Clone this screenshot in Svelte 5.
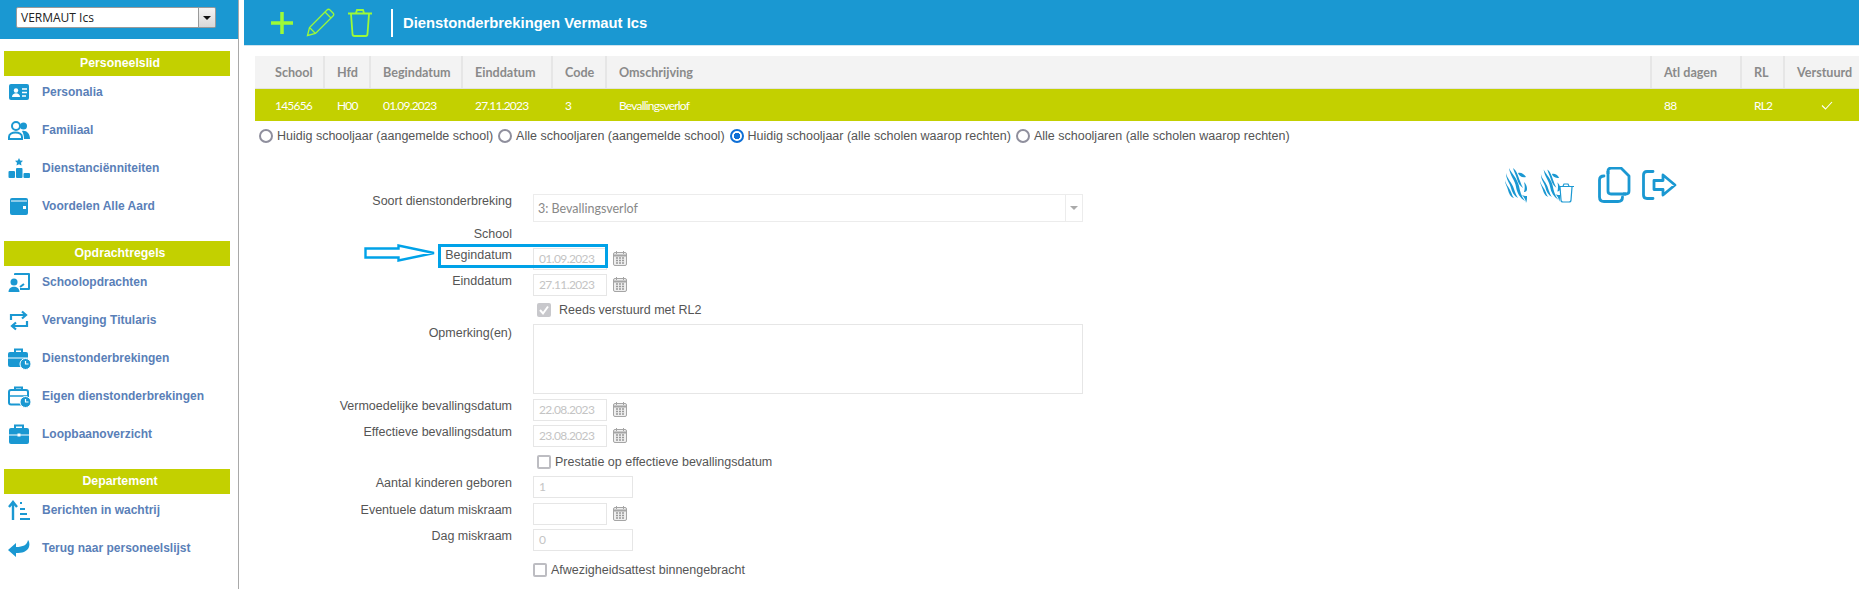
<script>
  const sections = [
    { title: "Personeelslid", items: [
      { label: "Personalia", icon: `<rect x="2" y="4" width="20" height="16" rx="2" fill="#1a98d2"/><circle cx="9" cy="10.5" r="2.2" fill="#fff"/><path d="M5 17c0-5 8-5 8 0z" fill="#fff"/><path d="M15 9h5M15 12.500h5M15 16h4" stroke="#fff" stroke-width="1.600"/>` },
      { label: "Familiaal", icon: `<circle cx="9" cy="8" r="4" fill="none" stroke="#1a98d2" stroke-width="2"/><circle cx="16.500" cy="8" r="3.500" fill="#1a98d2"/><path d="M2 21v-2c0-6 13-6 13 0v2z" fill="none" stroke="#1a98d2" stroke-width="2"/><path d="M15 13c4-1 8 2 8 8h-6c0-4-1-6-2-8z" fill="#1a98d2"/>` },
      { label: "Dienstanciënniteiten", icon: `<path d="M12 2l1.200 2.500 2.800.3-2 2 .5 2.700-2.500-1.300-2.500 1.300.5-2.700-2-2 2.800-.3z" fill="#1a98d2"/><rect x="1.500" y="15" width="6.500" height="7" rx="1" fill="#1a98d2"/><rect x="9" y="12" width="6.500" height="10" rx="1" fill="#1a98d2"/><rect x="16.500" y="17" width="6.500" height="5" rx="1" fill="#1a98d2"/>` },
      { label: "Voordelen Alle Aard", icon: `<rect x="3" y="4" width="18" height="17" rx="2" fill="#1a98d2"/><path d="M4 7h16" stroke="#fff" stroke-width="1"/><rect x="16" y="12" width="3" height="3" fill="#fff"/>` },
    ]},
    { title: "Opdrachtregels", items: [
      { label: "Schoolopdrachten", icon: `<path d="M8 5V4h14v15H13" fill="none" stroke="#1a98d2" stroke-width="2" stroke-linejoin="round"/><circle cx="7" cy="12" r="3.500" fill="#1a98d2"/><path d="M1.500 22c0-7 11-7 11 0z" fill="#1a98d2"/><path d="M13 17l4-3" stroke="#1a98d2" stroke-width="2"/>` },
      { label: "Vervanging Titularis", icon: `<path d="M4 12V7h14M15 3.500L19 7l-4 3.500M20 13v5H6M9 14.500L5 18l4 3.500" fill="none" stroke="#1a98d2" stroke-width="2.200"/>` },
      { label: "Dienstonderbrekingen", icon: `<path d="M8 6V3.500h7V6" fill="none" stroke="#1a98d2" stroke-width="2"/><rect x="1" y="6" width="20" height="15" rx="2" fill="#1a98d2"/><path d="M1 12h20" stroke="#fff"/><circle cx="18.500" cy="18" r="5.500" fill="#1a98d2" stroke="#fff"/><path d="M18.500 15v3h3" fill="none" stroke="#fff" stroke-width="1.200"/>` },
      { label: "Eigen dienstonderbrekingen", icon: `<path d="M8 6V3.500h7V6" fill="none" stroke="#1a98d2" stroke-width="2"/><rect x="2" y="6" width="19" height="14.500" rx="2" fill="none" stroke="#1a98d2" stroke-width="2"/><path d="M2 12h19" stroke="#1a98d2" stroke-width="1.500"/><circle cx="18.500" cy="18" r="5.500" fill="#1a98d2" stroke="#fff"/><path d="M18.500 15v3h3" fill="none" stroke="#fff" stroke-width="1.200"/>` },
      { label: "Loopbaanoverzicht", icon: `<path d="M8 6V3.500h8V6" fill="none" stroke="#1a98d2" stroke-width="2"/><rect x="2" y="6" width="20" height="16" rx="2" fill="#1a98d2"/><path d="M2 13h20" stroke="#fff"/><rect x="10.500" y="11.500" width="3" height="3" fill="#fff"/>` },
    ]},
    { title: "Departement", items: [
      { label: "Berichten in wachtrij", icon: `<path d="M6 22V5M2 9l4-5 4 5" fill="none" stroke="#1a98d2" stroke-width="2.400"/><path d="M13 5h2M13 11h5M13 16h7M13 21h10" stroke="#1a98d2" stroke-width="2"/>` },
      { label: "Terug naar personeelslijst", icon: `<path d="M9 7L1 14l8 7v-4c6 0 11-1 13-6 1-3 0-6-1-7-1 5-5 7-12 7z" fill="#1a98d2"/>` },
    ]},
  ];

  const columns = [
    { cls: "c-school", head: "School", val: "145656" },
    { cls: "c-hfd", head: "Hfd", val: "H00" },
    { cls: "c-begin", head: "Begindatum", val: "01.09.2023" },
    { cls: "c-eind", head: "Einddatum", val: "27.11.2023" },
    { cls: "c-code", head: "Code", val: "3" },
    { cls: "c-oms", head: "Omschrijving", val: "Bevallingsverlof" },
    { cls: "c-atl", head: "Atl dagen", val: "88" },
    { cls: "c-rl", head: "RL", val: "RL2" },
    { cls: "c-verst", head: "Verstuurd", val: "" },
  ];

  const radios = [
    { label: "Huidig schooljaar (aangemelde school)", on: false },
    { label: "Alle schooljaren (aangemelde school)", on: false },
    { label: "Huidig schooljaar (alle scholen waarop rechten)", on: true },
    { label: "Alle schooljaren (alle scholen waarop rechten)", on: false },
  ];
</script>

{#snippet calendar()}
  <svg class="cal" viewBox="0 0 14 15">
    <rect x="0.500" y="1.500" width="13" height="13" rx="1.500" fill="#eee" stroke="#a5a5a5"/>
    <path d="M1 4.500h12" stroke="#a5a5a5" stroke-width="2"/>
    <path d="M3.500 0v3M10.500 0v3" stroke="#a5a5a5"/>
    <path d="M3 7h2M6 7h2M9 7h2M3 9.500h2M6 9.500h2M9 9.500h2M3 12h2M6 12h2M9 12h2" stroke="#999" stroke-width="1.300"/>
  </svg>
{/snippet}

{#snippet lion()}
  <g fill="#1a98d2">
    <path d="M4 0c3 6 8 10 10 18 1 5 2 10 6 15-5-3-8-8-9-14C10 12 5 8 4 0z"/>
    <path d="M1 5c1 6 6 9 8 16 1 3 2 6 4 9-4-2-6-6-7-10C5 15 1 12 1 5z"/>
    <path d="M0 12c1 5 4 7 6 12 1 2 1 4 3 6-4-1-5-5-6-8-1-4-3-6-3-10z"/>
    <path d="M8 0c4 3 5 8 7 13 1 3 2 5 3 7-3-2-5-5-6-9-1-4-3-7-4-11z"/>
    <path d="M13 5c3-1 6 1 8 4-4 1-7-1-8-4z"/>
    <path d="M19 14c2 2 3 4 3 7 0 2-1 3-3 3 1-3 1-7 0-10z"/>
    <path d="M17 27c2 1 4 1 5 1 0 2 0 5-1 7 0-3-2-6-4-8z"/>
  </g>
{/snippet}

<div class="page">
  <aside>
    <div class="picker">
      <div class="combo">
        <span class="combo-text">VERMAUT Ics</span>
        <span class="combo-btn"><i></i></span>
      </div>
    </div>
    {#each sections as section}
      <section>
        <h3>{section.title}</h3>
        {#each section.items as item}
          <a href="#top" class="nav">
            <svg viewBox="0 0 24 24">{@html item.icon}</svg>
            <span>{item.label}</span>
          </a>
        {/each}
      </section>
    {/each}
  </aside>

  <main>
    <header>
      <svg class="tool plus" viewBox="0 0 24 24"><path d="M12 1v22M1 12h22" stroke="#9dfa37" stroke-width="3.500"/></svg>
      <svg class="tool pencil" viewBox="0 0 29 29"><path d="M1.500 27.500l2-8L21 2c1-1 2-1 3 0l3 3c1 1 1 2 0 3L9.500 25.500zM3.500 19.500l6 6M19 4l6 6" fill="none" stroke="#9dfa37" stroke-width="1.300"/></svg>
      <svg class="tool trash" viewBox="0 0 24 28"><path d="M0 4.500h24M8 4l1-3h6l1 3M3 5l1.500 20c0 1 1 2 2 2h11c1 0 2-1 2-2L21 5" fill="none" stroke="#9dfa37" stroke-width="1.800"/></svg>
      <div class="sep"></div>
      <h1>Dienstonderbrekingen Vermaut Ics</h1>
    </header>

    <div class="content">
      <div class="grid head">
        {#each columns as col}
          <div class="cell {col.cls}">{col.head}</div>
        {/each}
      </div>
      <div class="grid row-on">
        {#each columns as col}
          <div class="cell {col.cls}">
            {#if col.cls === "c-verst"}
              <svg class="tick" viewBox="0 0 12 9"><path d="M1 4.500l3.500 3.500L11 1" fill="none" stroke="#fff" stroke-width="1.100"/></svg>
            {:else}
              {col.val}
            {/if}
          </div>
        {/each}
      </div>

      <div class="radios">
        {#each radios as radio}
          <span class="radio" class:on={radio.on}></span>
          <span class="radio-label">{radio.label}</span>
        {/each}
      </div>

      <div class="actions">
        <svg class="lion" viewBox="0 0 23 35">{@render lion()}</svg>
        <span class="lion-trash">
          <svg class="lion" viewBox="0 0 23 35">{@render lion()}</svg>
          <svg class="mini-trash" viewBox="0 0 16 20"><path d="M0 3.500h16M5 3l1-2h4l1 2M2 4l1 13c0 1 1 2 2 2h6c1 0 2-1 2-2l1-13" fill="none" stroke="#1a98d2" stroke-width="1.200"/></svg>
        </span>
        <svg class="copy" viewBox="0 0 33 36"><path d="M10 7V4c0-1.500 1-3 3-3h10l8 8v15c0 2-1 3-3 3h-3M13 1.500" fill="none" stroke="#1a98d2" stroke-width="2.800" stroke-linejoin="round"/><path d="M10 4v20c0 2 1 3 3 3h15" fill="none" stroke="#1a98d2" stroke-width="2.800"/><path d="M6 9C3 9 1.500 10 1.500 13v17c0 3 2 4.500 4.500 4.500h14c3 0 4.500-1.500 4.500-4.500" fill="none" stroke="#1a98d2" stroke-width="2.800" stroke-linecap="round"/></svg>
        <svg class="leave" viewBox="0 0 35 30"><path d="M11 1.500H5C2.500 1.500 1.500 3 1.500 5v20c0 2 1 3.500 3.500 3.500h6" fill="none" stroke="#1a98d2" stroke-width="2.800" stroke-linecap="round"/><path d="M12 10.500h9V5l12 10-12 10v-5.500h-9z" fill="none" stroke="#1a98d2" stroke-width="2.800" stroke-linejoin="round"/></svg>
      </div>

      <form>
        <div class="f soort">
          <span class="lbl">Soort dienstonderbreking</span>
          <div class="dd"><span>3: Bevallingsverlof</span><b><i></i></b></div>
        </div>
        <div class="f school"><span class="lbl">School</span></div>
        <div class="f date begin">
          <span class="lbl">Begindatum</span>
          <div class="in">01.09.2023</div>
          {@render calendar()}
        </div>
        <div class="f date">
          <span class="lbl">Einddatum</span>
          <div class="in">27.11.2023</div>
          {@render calendar()}
        </div>
        <div class="f check reeds">
          <span class="lbl"></span>
          <span class="box done"><svg viewBox="0 0 14 14"><path d="M3 7l3 3.500L11 3.500" fill="none" stroke="#fff" stroke-width="2"/></svg></span>
          <span class="ctext">Reeds verstuurd met RL2</span>
        </div>
        <div class="f area">
          <span class="lbl">Opmerking(en)</span>
          <div class="ta"></div>
        </div>
        <div class="f date">
          <span class="lbl">Vermoedelijke bevallingsdatum</span>
          <div class="in">22.08.2023</div>
          {@render calendar()}
        </div>
        <div class="f date">
          <span class="lbl">Effectieve bevallingsdatum</span>
          <div class="in">23.08.2023</div>
          {@render calendar()}
        </div>
        <div class="f check prest">
          <span class="lbl"></span>
          <span class="box"></span>
          <span class="ctext">Prestatie op effectieve bevallingsdatum</span>
        </div>
        <div class="f date aantal">
          <span class="lbl">Aantal kinderen geboren</span>
          <div class="in wide">1</div>
        </div>
        <div class="f date event">
          <span class="lbl">Eventuele datum miskraam</span>
          <div class="in"></div>
          {@render calendar()}
        </div>
        <div class="f date dag">
          <span class="lbl">Dag miskraam</span>
          <div class="in wide">0</div>
        </div>
        <div class="f check afw">
          <span class="lbl"></span>
          <span class="box"></span>
          <span class="ctext">Afwezigheidsattest binnengebracht</span>
        </div>

        <!-- annotation drawn on top of the form -->
        <div class="mark"></div>
        <svg class="arrow" viewBox="0 0 72 18"><path d="M1.500 4.500h33V1.500L70 9 34.500 16.500v-3h-33z" fill="#fff" stroke="#00a2e8" stroke-width="2.400"/></svg>
      </form>
    </div>
  </main>
</div>

<style>
  :global(body) {
    margin: 0;
    background: #fff;
    font-family: "Liberation Sans", Arial, sans-serif;
  }
  .page {
    display: flex;
    width: 1859px;
    height: 589px;
    overflow: hidden;
  }
  aside {
    width: 234px;
    flex: none;
    border-right: 1px solid #a9a9a9;
    padding-left: 4px;
    margin-right: 5px;
  }
  .picker {
    background: #1a98d2;
    height: 39px;
    margin-left: -4px;
    margin-bottom: 12px;
    padding: 7px 0 0 16px;
    box-sizing: border-box;
  }
  .combo {
    display: flex;
    height: 21px;
    width: 200px;
  }
  .combo-text {
    flex: 1;
    background: #fff;
    border: 1px solid #9a9a9a;
    border-radius: 2px 0 0 2px;
    font: 12px/20px "Open Sans", sans-serif;
    color: #222;
    padding-left: 4px;
  }
  .combo-btn {
    width: 16px;
    border: 1px solid #9a9a9a;
    border-left: 0;
    border-radius: 0 2px 2px 0;
    background: linear-gradient(#f4f4f4, #d8d8d8);
    display: flex;
    align-items: center;
    justify-content: center;
  }
  .combo-btn i {
    border: 4px solid transparent;
    border-top: 4px solid #111;
    border-bottom: 0;
  }
  section {
    width: 226px;
    margin-bottom: 19px;
  }
  h3 {
    margin: 0;
    height: 25px;
    padding-left: 6px;
    background: #c3d000;
    color: #fff;
    font-size: 12.300px;
    font-weight: bold;
    line-height: 25px;
    text-align: center;
  }
  .nav {
    display: flex;
    align-items: center;
    gap: 11px;
    height: 32px;
    margin-bottom: 6px;
    text-decoration: none;
    color: #5a7fb8;
    font-size: 12px;
    font-weight: bold;
  }
  .nav svg {
    width: 24px;
    height: 24px;
    flex: none;
    margin-left: 3px;
  }
  main {
    flex: 1;
    min-width: 0;
  }
  header {
    height: 45px;
    background: #1a98d2;
    border-bottom: 1px solid #cfe3ee;
    display: flex;
    align-items: center;
    padding-left: 26px;
  }
  .tool {
    flex: none;
  }
  .plus {
    width: 24px;
    height: 24px;
    margin-right: 12px;
  }
  .pencil {
    width: 29px;
    height: 29px;
    margin-right: 13px;
  }
  .trash {
    width: 24px;
    height: 28px;
  }
  .sep {
    width: 2px;
    height: 28px;
    background: #fff;
    margin: 0 10px 0 19px;
  }
  h1 {
    margin: 0;
    color: #fff;
    font-size: 14.800px;
    font-weight: bold;
  }
  .content {
    padding: 10px 0 0 11px;
  }
  .grid {
    display: grid;
    grid-template-columns: 70px 46px 92px 90px 54px 1045px 90px 43px 1fr;
    font-family: Lato, sans-serif;
  }
  .head {
    height: 33px;
    background: #f3f3f3;
    border-bottom: 1px solid #e2e2e2;
    box-sizing: border-box;
    color: #8a8a8a;
    font-weight: bold;
    font-size: 12.600px;
  }
  .head .cell {
    border-right: 2px solid #e6e6e6;
    box-sizing: border-box;
  }
  .head .cell:last-child {
    border-right: 0;
  }
  .cell {
    display: flex;
    align-items: center;
    padding-left: 12px;
  }
  .c-school {
    padding-left: 20px;
  }
  .row-on {
    height: 32px;
    background: #c3d000;
    color: #fff;
    font-size: 12px;
    letter-spacing: -0.800px;
  }
  .row-on .c-verst {
    padding-left: 36px;
  }
  .tick {
    width: 12px;
    height: 9px;
  }
  .radios {
    display: flex;
    align-items: center;
    height: 30px;
    padding-left: 4px;
    font-size: 12.500px;
    color: #555;
  }
  .radio {
    width: 10px;
    height: 10px;
    border: 2px solid #8f8f9d;
    border-radius: 50%;
    margin-right: 4px;
    background: #fff;
  }
  .radio.on {
    border-color: #0f6fd6;
    background: radial-gradient(circle, #0f6fd6 0 3px, #fff 3.500px);
  }
  .radio-label {
    margin-right: 5px;
  }
  .actions {
    display: flex;
    align-items: center;
    height: 36px;
    margin: 15px 0 -42px 1250px;
    padding-top: 1px;
  }
  .lion {
    width: 23px;
    height: 35px;
    flex: none;
  }
  .lion-trash {
    display: flex;
    align-items: flex-end;
    margin-left: 12px;
  }
  .lion-trash .lion {
    width: 21px;
  }
  .mini-trash {
    width: 16px;
    height: 20px;
    margin-left: -3px;
  }
  .copy {
    width: 33px;
    height: 36px;
    margin-left: 24px;
  }
  .leave {
    width: 35px;
    height: 30px;
    margin-left: 11px;
  }
  form {
    position: relative;
    padding-top: 33px;
    font-size: 12.500px;
    color: #555;
  }
  .f {
    display: flex;
    margin-top: 4px;
  }
  .lbl {
    width: 257px;
    flex: none;
    text-align: right;
    margin-right: 21px;
    line-height: 15px;
  }
  .soort {
    margin-top: 0;
    height: 28px;
  }
  .dd {
    width: 550px;
    box-sizing: border-box;
    border: 1px solid #ececec;
    display: flex;
    align-items: center;
    padding-left: 4px;
    color: #888;
    font: 12.500px "Lato", sans-serif;
  }
  .dd span {
    flex: 1;
  }
  .dd b {
    width: 16px;
    height: 100%;
    border-left: 1px solid #ececec;
    display: flex;
    align-items: center;
    justify-content: center;
  }
  .dd i {
    border: 4px solid transparent;
    border-top: 4px solid #aaa;
    border-bottom: 0;
  }
  .school {
    height: 18px;
  }
  .school .lbl {
    line-height: 16px;
  }
  .date {
    height: 22px;
  }
  .in {
    width: 74px;
    box-sizing: border-box;
    border: 1px solid #e6e6e6;
    padding-left: 5px;
    font: 12px/20px Lato, sans-serif;
    letter-spacing: -0.600px;
    color: #c4c4c4;
  }
  .in.wide {
    width: 100px;
  }
  .cal {
    width: 14px;
    height: 15px;
    margin: 3px 0 0 6px;
  }
  .check {
    align-items: center;
    height: 14px;
  }
  .box {
    width: 14px;
    height: 14px;
    box-sizing: border-box;
    border: 2px solid #bdbdc2;
    border-radius: 2px;
    flex: none;
    margin-left: 4px;
  }
  .box.done {
    background: #c8c8cc;
    border: 0;
    display: flex;
  }
  .ctext {
    margin-left: 8px;
  }
  .reeds {
    margin-top: 7px;
  }
  .prest {
    margin-top: 8px;
  }
  .prest .ctext {
    margin-left: 4px;
  }
  .area {
    margin-top: 7px;
    margin-bottom: 5px;
  }
  .ta {
    width: 550px;
    height: 70px;
    box-sizing: border-box;
    border: 1px solid #e6e6e6;
  }
  .area .lbl {
    padding-top: 2px;
  }
  .aantal {
    margin-top: 7px;
  }
  .event {
    margin-top: 5px;
  }
  .afw {
    margin-top: 12px;
  }
  .afw .box {
    margin-left: 0;
  }
  .afw .ctext {
    margin-left: 4px;
  }
  .mark {
    position: absolute;
    left: 183px;
    top: 83px;
    width: 164px;
    height: 18px;
    border: 3px solid #00a2e8;
    pointer-events: none;
  }
  .arrow {
    position: absolute;
    left: 109px;
    top: 83px;
    width: 72px;
    height: 18px;
  }
</style>
